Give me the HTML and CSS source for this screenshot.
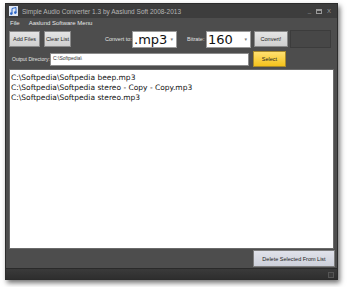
FILE: index.html
```html
<html>
<head>
<title>Simple Audio Converter</title>
<link rel="stylesheet" href="styles.css">
</head>
<body>
<div class="window">
  <div class="titlebar">
    <svg class="appicon" width="9" height="10" viewBox="0 0 9 10">
      <rect x="0" y="0" width="9" height="10" fill="#dfe8f5"/>
      <path d="M3 7.5V2.5L7 1.5V6.5" stroke="#2a66c8" stroke-width="1" fill="none"/>
      <circle cx="2.3" cy="7.6" r="1.3" fill="#2a66c8"/>
      <circle cx="6.3" cy="6.6" r="1.3" fill="#2a66c8"/>
    </svg>
    <span class="title">Simple Audio Converter 1.3 by Aaslund Soft 2008-2013</span>
    <span class="controls">
      <span class="ctl">_</span>
      <svg width="6" height="5" viewBox="0 0 6 5"><rect x="0.5" y="0.5" width="5" height="4" fill="none" stroke="#9a9a9a"/><line x1="0" y1="1.5" x2="6" y2="1.5" stroke="#9a9a9a"/></svg>
      <span class="ctl">X</span>
    </span>
  </div>
  <div class="menubar">
    <span>File</span>
    <span>Aaslund Software Menu</span>
  </div>
  <div class="toolbar">
    <div class="btn">Add Files</div>
    <div class="btn btn-clear">Clear List</div>
    <span class="lbl lbl-convert">Convert to:</span>
    <div class="combo">.mp3<span class="arrow">&#9662;</span></div>
    <span class="lbl lbl-bitrate">Bitrate:</span>
    <div class="combo">160<span class="arrow">&#9662;</span></div>
    <div class="btn btn-convert">Convert!</div>
    <div class="panel"></div>
  </div>
  <div class="outrow">
    <span class="lbl lbl-out">Output Directory:</span>
    <div class="textbox">C:\Softpedia\</div>
    <div class="btn btn-select">Select</div>
  </div>
  <div class="list">
    <div>C:\Softpedia\Softpedia beep.mp3</div>
    <div>C:\Softpedia\Softpedia stereo - Copy - Copy.mp3</div>
    <div>C:\Softpedia\Softpedia stereo.mp3</div>
  </div>
  <div class="bottom">
    <div class="btn btn-delete">Delete Selected From List</div>
  </div>
  <div class="status"><span class="grip"></span></div>
</div>
</body>
</html>
```
FILE: styles.css
```css
body { margin:0; background:#fff; font-family:"Liberation Sans", Arial, sans-serif; }
.window { margin:3px 0 0 5px; width:331px; height:275px; background:#4d4d4d; border:1px solid #2c2c2c; box-shadow:2px 3px 5px rgba(0,0,0,.55); display:flex; flex-direction:column; }

.titlebar { height:14px; background:#3d3d3d; display:flex; align-items:center; padding:0 3px; gap:4px; }
.title { color:#b5b5b5; font-size:6.5px; flex:1; white-space:nowrap; }
.controls { display:flex; align-items:center; gap:5px; color:#9a9a9a; font-size:6px; padding-right:3px; }

.menubar { height:10px; display:flex; align-items:center; gap:9px; padding:0 4px; color:#e6e6e6; font-size:6px; }

.toolbar { height:22px; display:flex; align-items:center; padding:0 3px; }
.btn { background:linear-gradient(#e4e4e4,#cfcfcf); border:1px solid #8a8a8a; color:#222; font-size:5.5px; white-space:nowrap; display:flex; align-items:center; justify-content:center; box-sizing:border-box; flex-shrink:0; }
.toolbar .btn { height:16px; width:31px; }
.btn-clear { margin-left:4px; width:27px !important; }
.lbl { color:#e2e2e2; font-size:5.5px; white-space:nowrap; flex-shrink:0; }
.lbl-convert { margin-left:34px; width:27px; }
.lbl-bitrate { margin-left:10px; width:19px; }
.combo { width:45px; height:17px; background:#fff; border:1px solid #9a9a9a; box-sizing:border-box; display:flex; align-items:center; font-family:"DejaVu Sans", sans-serif; font-size:13px; color:#111; padding-left:1px; flex-shrink:0; }
.arrow { font-size:5px; color:#777; margin-left:auto; margin-right:3px; }
.btn-convert { margin-left:3px; width:34px !important; }
.panel { margin-left:2px; width:41px; height:18px; background:#474747; border:1px solid #3c3c3c; box-sizing:border-box; }

.outrow { height:18px; display:flex; align-items:center; padding:0 3px 0 6px; }
.lbl-out { font-size:5px; width:38px; }
.textbox { width:199px; height:13px; background:#fff; border:1px solid #8c8c8c; box-sizing:border-box; font-size:5px; color:#333; padding:1px 2px; }
.btn-select { margin-left:4px; width:33px; height:16px; background:linear-gradient(#ffe070,#f4c21c); border-color:#a98a2a; }

.list { flex:1; margin:1px 3px 0 3px; background:#fff; border:1px solid #6a6a6a; padding:3px 1px; font-family:"DejaVu Sans", sans-serif; font-size:7.5px; line-height:10px; color:#111; }

.bottom { height:19px; display:flex; justify-content:flex-end; align-items:center; padding:0 2px; }
.btn-delete { width:82px; height:17px; background:linear-gradient(#e0e2ea,#cdd0da); border-color:#7d7d7d; }

.status { height:9px; background:linear-gradient(#3a3a3a,#2e2e2e); border-top:1px solid #2a2a2a; display:flex; justify-content:flex-end; align-items:flex-end; padding:0 3px 1px 0; }
.grip { width:6px; height:6px; background:#3a3a3a; border:1px solid #555; box-sizing:border-box; }
```
